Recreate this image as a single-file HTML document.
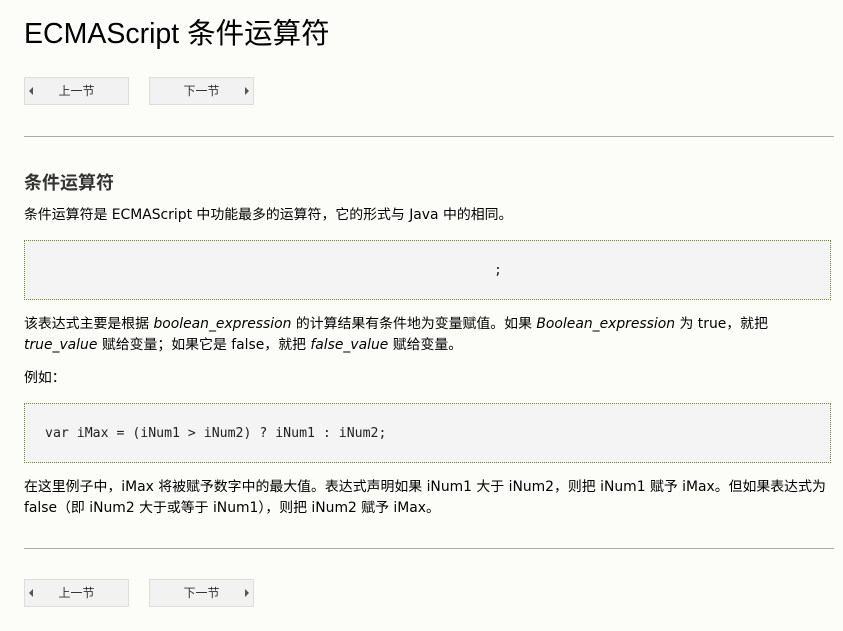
<!DOCTYPE html>
<html><head><meta charset="utf-8"><style>
body{margin:0;background:#fcfcf9;font-family:"DejaVu Sans","Noto Sans CJK SC",sans-serif;color:#000;width:843px;height:631px;overflow:hidden;position:relative}
.a{position:absolute;white-space:nowrap}
h1{position:absolute;left:24px;top:11px;margin:0;font-size:28.5px;font-weight:normal;color:#000;font-family:"Liberation Sans","Noto Sans CJK SC",sans-serif}
.btn{position:absolute;width:103px;height:26px;background:#f2f2f2;border:1px solid #ddd;font-size:12px;color:#333;line-height:26px;text-align:center}
.btn .tl{position:absolute;left:4px;top:9px;width:0;height:0;border-top:4px solid transparent;border-bottom:4px solid transparent;border-right:4px solid #555}
.btn .tr{position:absolute;right:4px;top:9px;width:0;height:0;border-top:4px solid transparent;border-bottom:4px solid transparent;border-left:4px solid #555}
.hr{position:absolute;left:24px;width:810px;height:1px;background:#aaa}
p{position:absolute;left:24px;margin:0;font-size:13.9px;line-height:21px;white-space:nowrap}
.box{position:absolute;left:24px;width:805px;height:58px;background:#f4f4f4;border:1px dotted #6b8a2a}
.code{font-family:"DejaVu Sans Mono","Liberation Mono",monospace;font-size:13.2px;position:absolute;color:#222}
</style></head><body>
<h1>ECMAScript 条件运算符</h1>
<div class="btn" style="left:24px;top:77px"><span class="tl"></span>上一节</div>
<div class="btn" style="left:149px;top:77px"><span class="tr"></span>下一节</div>
<div class="hr" style="top:136px"></div>
<div class="a" style="left:24px;top:169px;font-size:18px;font-weight:bold;color:#333">条件运算符</div>
<p style="top:205px">条件运算符是 ECMAScript 中功能最多的运算符，它的形式与 Java 中的相同。</p>
<div class="box" style="top:240px"><span class="code" style="left:469px;top:22px">;</span></div>
<p style="top:314px">该表达式主要是根据 <i>boolean_expression</i> 的计算结果有条件地为变量赋值。如果 <i>Boolean_expression</i> 为 true，就把<br><i>true_value</i> 赋给变量；如果它是 false，就把 <i>false_value</i> 赋给变量。</p>
<p style="top:368px">例如：</p>
<div class="box" style="top:403px"><span class="code" style="left:20px;top:22px">var iMax = (iNum1 &gt; iNum2) ? iNum1 : iNum2;</span></div>
<p style="top:477px">在这里例子中，iMax 将被赋予数字中的最大值。表达式声明如果 iNum1 大于 iNum2，则把 iNum1 赋予 iMax。但如果表达式为<br>false（即 iNum2 大于或等于 iNum1），则把 iNum2 赋予 iMax。</p>
<div class="hr" style="top:548px"></div>
<div class="btn" style="left:24px;top:579px"><span class="tl"></span>上一节</div>
<div class="btn" style="left:149px;top:579px"><span class="tr"></span>下一节</div>
</body></html>
